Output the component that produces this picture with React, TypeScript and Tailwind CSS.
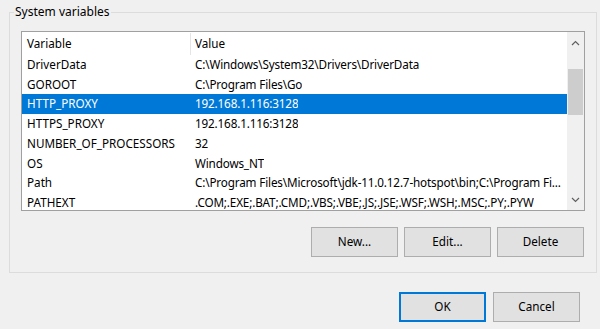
const rows = [
  { name: "DriverData", value: "C:\\Windows\\System32\\Drivers\\DriverData" },
  { name: "GOROOT", value: "C:\\Program Files\\Go" },
  { name: "HTTP_PROXY", value: "192.168.1.116:3128", selected: true },
  { name: "HTTPS_PROXY", value: "192.168.1.116:3128" },
  { name: "NUMBER_OF_PROCESSORS", value: "32" },
  { name: "OS", value: "Windows_NT" },
  { name: "Path", value: "C:\\Program Files\\Microsoft\\jdk-11.0.12.7-hotspot\\bin;C:\\Program Fi..." },
  { name: "PATHEXT", value: ".COM;.EXE;.BAT;.CMD;.VBS;.VBE;.JS;.JSE;.WSF;.WSH;.MSC;.PY;.PYW" },
];

function Chevron({ up }: { up?: boolean }) {
  return (
    <svg width="9" height="6" viewBox="0 0 9 6" className="text-[#606060]">
      <path
        d={up ? "M1 5 L4.5 1.5 L8 5" : "M1 1 L4.5 4.5 L8 1"}
        fill="none"
        stroke="currentColor"
        strokeWidth="1.2"
      />
    </svg>
  );
}

function Button({ label, focused }: { label: string; focused?: boolean }) {
  return (
    <button
      className={
        focused
          ? "w-[87px] h-[30px] bg-[#e1e1e1] border-2 border-[#0078d7] text-black"
          : "w-[87px] h-[30px] bg-[#e1e1e1] border border-[#adadad] text-black"
      }
    >
      {label}
    </button>
  );
}

export default function App() {
  return (
    <div
      className="w-[600px] h-[329px] bg-[#f0f0f0] text-[11.7px] text-black overflow-hidden"
      style={{ fontFamily: '"Noto Sans", "Open Sans", sans-serif' }}
    >
      <div className="pt-[12px] pl-[9px]">
        {/* group box */}
        <div className="relative w-[588px] h-[261px] border border-[#dcdcdc]">
          <span className="absolute left-[4px] top-[-10px] px-[1px] bg-[#f0f0f0] leading-[17px] text-[12px]">
            System variables
          </span>

          {/* list view */}
          <div className="ml-[11px] mt-[18px] w-[564px] h-[180px] border border-[#a0a0a0] flex bg-white">
            <div className="flex-1 overflow-hidden">
              <div className="flex h-[23px] items-center pt-[1px]">
                <div className="w-[168px] pl-[5px]">Variable</div>
                <div className="w-px h-full bg-[#e5e5e5]" />
                <div className="pl-[4px]">Value</div>
              </div>
              {rows.map((r) => (
                <div
                  key={r.name}
                  className={
                    r.selected
                      ? "flex h-[19.7px] items-center bg-[#0078d7] text-white whitespace-nowrap"
                      : "flex h-[19.7px] items-center whitespace-nowrap"
                  }
                >
                  <div className="w-[169px] pl-[5px] shrink-0">{r.name}</div>
                  <div className="pl-[4px] overflow-hidden tracking-[-0.15px]">{r.value}</div>
                </div>
              ))}
            </div>

            {/* scrollbar */}
            <div className="w-[17px] bg-[#f0f0f0] flex flex-col items-center">
              <div className="h-[22px] flex items-center justify-center">
                <Chevron up />
              </div>
              <div className="h-[15px]" />
              <div className="w-[15px] h-[46px] bg-[#cdcdcd]" />
              <div className="flex-1" />
              <div className="h-[20px] flex items-center justify-center">
                <Chevron />
              </div>
            </div>
          </div>

          <div className="mt-[16px] ml-[301px] flex gap-[6px]">
            <Button label="New..." />
            <Button label="Edit..." />
            <Button label="Delete" />
          </div>
        </div>
      </div>

      <div className="mt-[19px] ml-[399px] flex gap-[7px]">
        <Button label="OK" focused />
        <Button label="Cancel" />
      </div>
    </div>
  );
}
